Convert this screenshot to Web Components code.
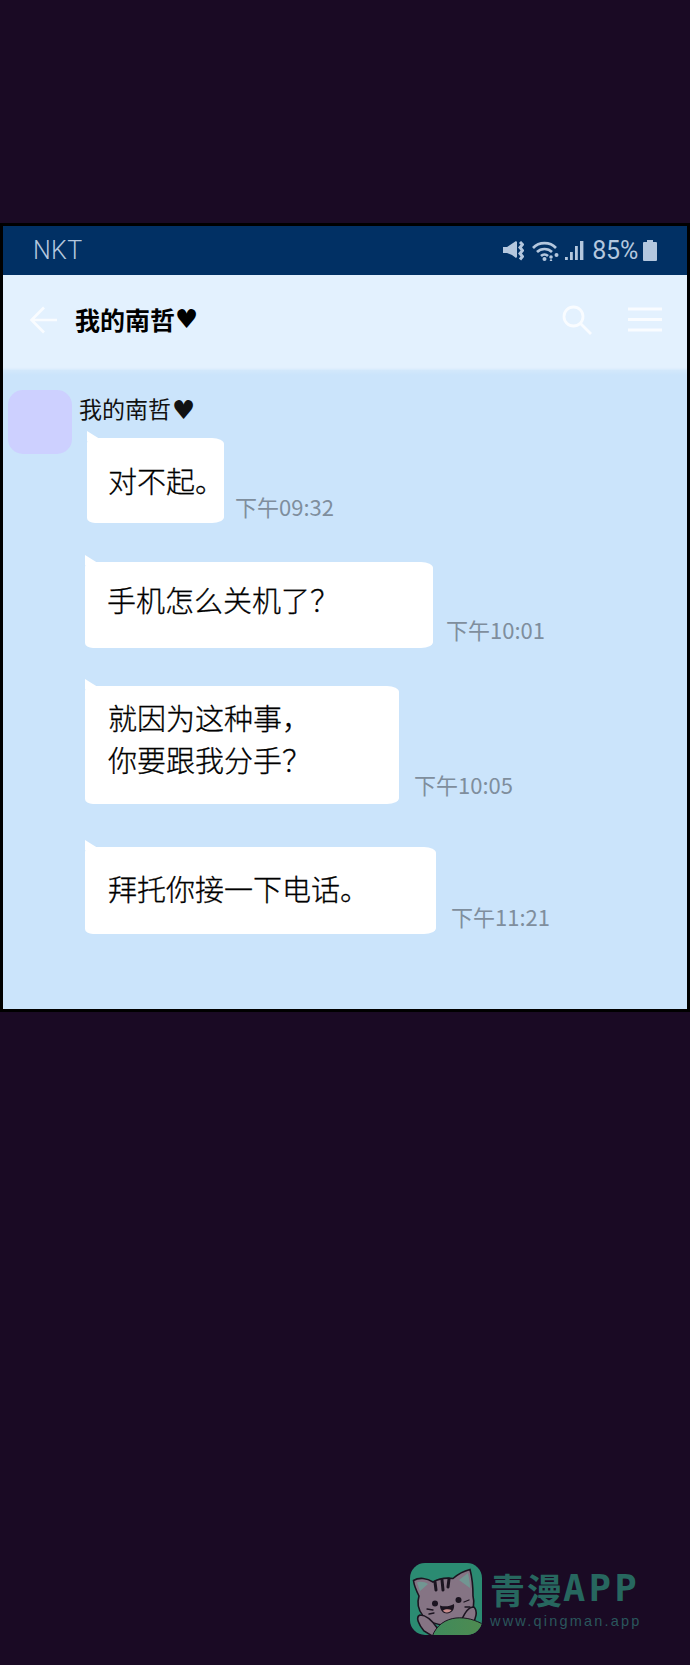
<!DOCTYPE html>
<html lang="zh">
<head>
<meta charset="utf-8">
<title>chat</title>
<style>
  html, body { margin: 0; padding: 0; }
  body {
    background: #1a0a24;
    width: 690px;
    height: 1665px;
    overflow: hidden;
    font-family: "Noto Sans CJK SC", "Noto Sans", sans-serif;
  }
</style>
</head>
<body>
<chat-panel>
  <status-bar slot="status" carrier="NKT" battery="85%"></status-bar>
  <chat-header slot="header" title="我的南哲"></chat-header>
  <chat-sender slot="sender" name="我的南哲"></chat-sender>
  <chat-message time="下午09:32" style="--left:8px;--w:137px;--pad:21px 0 22px 21px;--gap:11px;--drop:2px;--top:8px">对不起。</chat-message>
  <chat-message time="下午10:01" style="--left:6px;--w:348px;--pad:16px 0 28px 22px;--gap:13px;--drop:4px;--top:39px">手机怎么关机了？</chat-message>
  <chat-message time="下午10:05" style="--left:6px;--w:314px;--pad:10px 0 24px 23px;--gap:15px;--drop:5px;--top:38px">就因为这种事，<br>你要跟我分手？</chat-message>
  <chat-message time="下午11:21" style="--left:6px;--w:351px;--pad:20px 0 25px 23px;--gap:15px;--drop:3px;--top:43px">拜托你接一下电话。</chat-message>
</chat-panel>
<app-mark></app-mark>

<script>
class ChatPanel extends HTMLElement {
    constructor() {
        super();
        this.attachShadow({ mode: 'open' }).innerHTML = `
        <style>
            :host{
                display: block;
                margin-top: 223px;
                border: 3px solid #000;
                background: #cbe4fb;
            }
            #body{
                box-sizing: border-box;
                height: 639px;
                padding: 20px 0 0 5px;
                display: grid;
                grid-template-columns: 64px 1fr;
                column-gap: 7px;
                align-items: start;
                background: linear-gradient(#d3e8fb, #cbe4fb 5px);
            }
        </style>
        <slot name="status"></slot>
        <slot name="header"></slot>
        <div id="body">
            <div id="avatar-col"><slot name="sender-avatar"></slot></div>
            <div id="messages"><slot name="sender"></slot><slot></slot></div>
        </div>`;
    }
}

class StatusBar extends HTMLElement {
    constructor() {
        super();
        this.attachShadow({ mode: 'open' });
    }
    connectedCallback() {
        this.shadowRoot.innerHTML = `
        <style>
            :host{
                display: flex;
                align-items: center;
                height: 49px;
                box-sizing: border-box;
                padding: 0 30px 0 30px;
                background: #013064;
                color: #b4c7de;
                font-family: Roboto, "Noto Sans", sans-serif;
                font-size: 25px;
            }
            #carrier{ font-weight: 300; flex: 1; letter-spacing: .3px; }
            #right{ display: flex; align-items: center; }
            svg{ display: block; fill: currentColor; filter: blur(.4px); }
            #pct{ margin: 0 5px 0 8px; letter-spacing: -.2px; }
        </style>
        <span id="carrier">${this.getAttribute('carrier')}</span>
        <div id="right">
            <svg width="21" height="20" viewBox="0 0 21 20">
                <path d="M0 6h4l9-6 1 1v15l-1 1-4-3-5-2H0z"/>
                <path d="M17 1l2.500 2.500-2.500 3 2.500 3-2.500 3 2.500 3-2.500 3" fill="none" stroke="currentColor" stroke-width="3"/>
            </svg>
            <svg width="27" height="20" viewBox="0 0 27 20" style="margin-left:8px">
                <g fill="none" stroke="currentColor" stroke-width="2.600">
                    <path d="M1 7c6-6.500 17-6.500 23 0"/>
                    <path d="M5 11c4-4 11-4 15 0"/>
                    <path d="M9 15c2-2 5-2 7 0"/>
                </g>
                <circle cx="12.500" cy="18" r="2"/>
                <circle cx="19" cy="16" r="1.800"/>
                <circle cx="24.500" cy="14" r="2"/>
                <circle cx="19" cy="19.500" r="1.200"/>
            </svg>
            <svg width="19" height="20" viewBox="0 0 19 20" style="margin-left:6px">
                <rect x="0" y="16" width="2.800" height="3"/>
                <rect x="5" y="11" width="2.800" height="8"/>
                <rect x="10" y="5" width="2.800" height="14"/>
                <rect x="15" y="0" width="3.400" height="19"/>
            </svg>
            <span id="pct">${this.getAttribute('battery')}</span>
            <svg width="14" height="21" viewBox="0 0 14 21">
                <path d="M4 0h6v2h3a1 1 0 0 1 1 1v17a1 1 0 0 1-1 1H1a1 1 0 0 1-1-1V3a1 1 0 0 1 1-1h3z"/>
            </svg>
        </div>`;
    }
}

class ChatHeader extends HTMLElement {
    constructor() {
        super();
        this.attachShadow({ mode: 'open' });
    }
    connectedCallback() {
        this.shadowRoot.innerHTML = `
        <style>
            :host{
                display: flex;
                align-items: center;
                height: 95px;
                box-sizing: border-box;
                padding: 0 25px 6px 26px;
                background: #e3f1fe;
                box-shadow: inset 0 -2px 2px -1px #d6e9fc;
            }
            #title{
                flex: 1;
                margin: -2px 0 0 16px;
                font-size: 25px;
                font-weight: 700;
                color: #000;
                display: flex;
                align-items: center;
            }
            #heart{ font-family: "DejaVu Sans", sans-serif; font-size: 26px; line-height: 1; }
            svg{ display: block; fill: none; stroke: #f9fcff; filter: blur(.4px); }
            #search{ margin-right: 36px; }
        </style>
        <svg width="30" height="30" viewBox="0 0 30 30" stroke-width="2.600">
            <path d="M28 15H3M15 2.500L2.500 15 15 27.500"/>
        </svg>
        <div id="title"><span>${this.getAttribute('title')}</span><span id="heart">♥</span></div>
        <svg id="search" width="30" height="30" viewBox="0 0 30 30" stroke-width="2.800">
            <circle cx="11.500" cy="11.500" r="9.500"/>
            <path d="M18.500 18.500L29 29"/>
        </svg>
        <svg width="34" height="25" viewBox="0 0 34 25" stroke-width="3">
            <path d="M0 2H34M0 12.500H34M0 23H34"/>
        </svg>`;
    }
}

class ChatSender extends HTMLElement {
    constructor() {
        super();
        this.attachShadow({ mode: 'open' });
    }
    connectedCallback() {
        this.shadowRoot.innerHTML = `
        <style>
            :host{
                display: block;
                height: 40px;
                position: relative;
                color: #111;
                font-size: 23px;
                line-height: 36px;
                white-space: nowrap;
            }
            #avatar{
                position: absolute;
                left: -71px;
                top: 0;
                width: 64px;
                height: 64px;
                border-radius: 15px;
                background: #cdd0ff;
            }
            #heart{ font-family: "DejaVu Sans", sans-serif; font-size: 26px; vertical-align: -1px; margin-left: 1px; }
        </style>
        <div id="avatar"></div>
        <span>${this.getAttribute('name')}</span><span id="heart">♥</span>`;
    }
}

class ChatMessage extends HTMLElement {
    constructor() {
        super();
        this.attachShadow({ mode: 'open' });
    }
    connectedCallback() {
        this.shadowRoot.innerHTML = `
        <style>
            :host{
                display: flex;
                align-items: flex-end;
                margin: var(--top) 0 0 var(--left);
            }
            #bubble{
                position: relative;
                box-sizing: border-box;
                width: var(--w);
                padding: var(--pad);
                background: #fff;
                border-radius: 5px 12px 12px 8px / 5px 6px 6px 5px;
                color: #000;
                font-size: 29px;
                font-weight: 300;
                -webkit-text-stroke: .3px #000;
                line-height: 42px;
                white-space: nowrap;
            }
            #bubble::before{
                content: "";
                position: absolute;
                left: 0;
                top: -7px;
                width: 12px;
                height: 10px;
                background: #fff;
                clip-path: polygon(0 0, 100% 75%, 100% 100%, 0 100%);
            }
            #time{
                margin: 0 0 var(--drop) var(--gap);
                font-size: 22px;
                line-height: 30px;
                color: #7f8e9d;
                white-space: nowrap;
            }
        </style>
        <div id="bubble"><slot></slot></div>
        <span id="time">${this.getAttribute('time')}</span>`;
    }
}

class AppMark extends HTMLElement {
    constructor() {
        super();
        this.attachShadow({ mode: 'open' }).innerHTML = `
        <style>
            :host{
                display: flex;
                margin: 551px 0 0 410px;
                width: 240px;
                gap: 8px;
            }
            svg{ display: block; flex: none; }
            #words{ padding-top: 5px; white-space: nowrap; }
            #name{
                display: flex;
                align-items: center;
                height: 40px;
                color: #27675f;
                font-size: 35px;
                font-weight: 700;
                letter-spacing: 2px;
            }
            #app{
                font-family: "DejaVu Sans Mono", monospace;
                font-size: 37px;
                font-weight: 700;
                letter-spacing: 3.500px;
                margin-left: -1px;
            }
            #url{
                font-family: "Liberation Sans", sans-serif;
                font-size: 14.500px;
                line-height: 18px;
                margin-top: 4px;
                letter-spacing: 2.200px;
                color: #2a565c;
            }
        </style>
        <svg width="72" height="72" viewBox="0 0 72 72">
            <defs>
                <clipPath id="c"><rect width="72" height="72" rx="15"/></clipPath>
                <linearGradient id="leaf" x1="0" x2="1" y1="0" y2="0">
                    <stop offset="0" stop-color="#3f8a5c"/>
                    <stop offset="1" stop-color="#4f8b50"/>
                </linearGradient>
            </defs>
            <g clip-path="url(#c)">
                <rect width="72" height="72" fill="#2b8b72"/>
                <path d="M9 33C6 27 4 22 3.500 17.500 9 14 17 15 23 19 29 15.500 36 14.500 43 15.500 47 12 54 8 60 6.500 62 14 63 24 63 33 66 45 60 61 36 62 14 62 5 46 9 33Z" fill="#857484" stroke="#1b1420" stroke-width="1.600"/>
                <path d="M7 19.500C10 18 15 19 18 21L10 28Z" fill="#68a598" opacity=".7"/>
                <path d="M58 10C59 15 60 20 60 25L49 17Z" fill="#68a598" opacity=".7"/>
                <g fill="none" stroke="#1b1420" stroke-width="3" stroke-linecap="round">
                    <path d="M25 19L26 27"/>
                    <path d="M32 17L33 27"/>
                    <path d="M39 16L38 24"/>
                </g>
                <circle cx="25" cy="40.500" r="3" fill="#1b1420"/>
                <circle cx="48.500" cy="37" r="3" fill="#1b1420"/>
                <path d="M30 42.500C34 44 40 43.500 44 41 45 47 41 50.500 37 50.500 33 50.500 30 47 30 42.500Z" fill="#1b1420"/>
                <path d="M33 47.500C35 46 39 46 41.500 47 40 50 35 50.500 33 47.500Z" fill="#c98b8b"/>
                <g fill="none" stroke="#1b1420" stroke-width="1.300" stroke-linecap="round">
                    <path d="M17 46L23 47M19 51L24 50"/>
                    <path d="M54 39L59 37M55 44L60 44"/>
                </g>
                <path d="M10 52C5 54 9 62 14 68L24 74 28 66C24 60 18 52 10 52Z" fill="#857484" stroke="#1b1420" stroke-width="1.600"/>
                <path d="M64 44C58 44 55 50 52 56L62 62C66 56 68 48 64 44Z" fill="#857484" stroke="#1b1420" stroke-width="1.600"/>
                <path d="M22 74C26 62 36 56 46 55 56 54 66 57 74 62V74Z" fill="url(#leaf)" stroke="#1b1420" stroke-width="1"/>
            </g>
        </svg>
        <div id="words">
            <div id="name"><span>青漫</span><span id="app">APP</span></div>
            <div id="url">www.qingman.app</div>
        </div>`;
    }
}

customElements.define('chat-panel', ChatPanel);
customElements.define('status-bar', StatusBar);
customElements.define('chat-header', ChatHeader);
customElements.define('chat-sender', ChatSender);
customElements.define('chat-message', ChatMessage);
customElements.define('app-mark', AppMark);
</script>
</body>
</html>
